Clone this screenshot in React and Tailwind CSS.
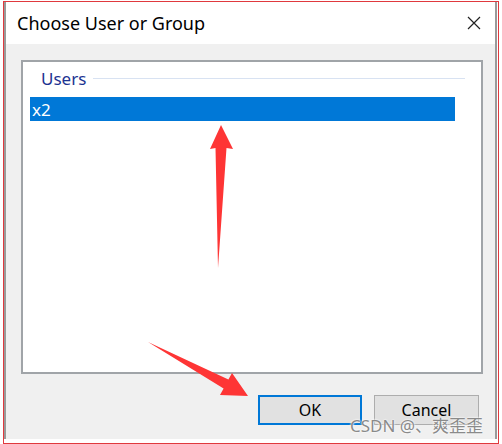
import React from 'react';

const font = { fontFamily: '"Noto Sans", "Open Sans", "Liberation Sans", sans-serif' };

export default function App() {
  return (
    <div className="relative w-[502px] h-[444px] bg-white overflow-hidden pt-[1px] pl-[3px]" style={font}>
      {/* red screenshot frame */}
      <div className="w-[496px] h-[443px] border border-[#e0393e] bg-white">
        {/* dialog window */}
        <div className="w-[493px] h-[437px] border-l-2 border-r-2 border-[#9a9a9a] flex flex-col">
          {/* title bar */}
          <div className="h-[42px] bg-white flex items-center justify-between pl-[11px] pr-[14px]">
            <span className="text-[18px] text-black leading-none">Choose User or Group</span>
            <svg width="14" height="14" viewBox="0 0 14 14">
              <path d="M1 1 L13 13 M13 1 L1 13" stroke="#222" strokeWidth="1.2" />
            </svg>
          </div>

          {/* body */}
          <div className="flex-1 bg-[#f0f0f0] flex flex-col pt-[16px]">
            <div className="ml-[15px] w-[462px] h-[314px] border-2 border-[#a0a4a8] bg-white flex flex-col pt-[4px]">
              <div className="h-[24px] flex items-center pl-[18px] pr-[16px]">
                <span className="text-[17px] text-[#1c3391] leading-none">Users</span>
                <div className="flex-1 ml-[7px] h-px bg-[#d8e2f2]"></div>
              </div>
              <div className="mt-[7px] ml-[7px] w-[425px] h-[24px] bg-[#0078d7] flex items-center pl-[2px]">
                <span className="text-[17px] text-white leading-none">x2</span>
              </div>
            </div>

            <div className="mt-[21px] flex justify-end gap-[12px] pr-[16px]">
              <button className="w-[104px] h-[30px] bg-[#e1e1e1] border-2 border-[#0078d7] text-[16px] text-black">
                OK
              </button>
              <button className="w-[105px] h-[30px] bg-[#e1e1e1] border border-[#adadad] text-[16px] text-black">
                Cancel
              </button>
            </div>
          </div>
        </div>
      </div>

      {/* annotation arrows */}
      <svg className="absolute left-0 top-0 pointer-events-none" width="502" height="444" viewBox="0 0 502 444">
        <polygon points="221,125 233,149 226.5,148 218,268 215.5,148 210,149" fill="#fe3535" />
        <polygon points="148,342 223.6,388.4 220,395 248,396 232,373 228.4,379.6" fill="#fe3535" />
      </svg>

      {/* watermark */}
      <div
        className="absolute left-[350px] top-[417px] text-[17px] text-[#8a8a8a] leading-none whitespace-nowrap"
        style={{ fontFamily: '"Noto Sans", "Noto Sans CJK SC", sans-serif', textShadow: '0 0 2px #fff, 0 0 2px #fff' }}
      >
        CSDN @、爽歪歪
      </div>
    </div>
  );
}
